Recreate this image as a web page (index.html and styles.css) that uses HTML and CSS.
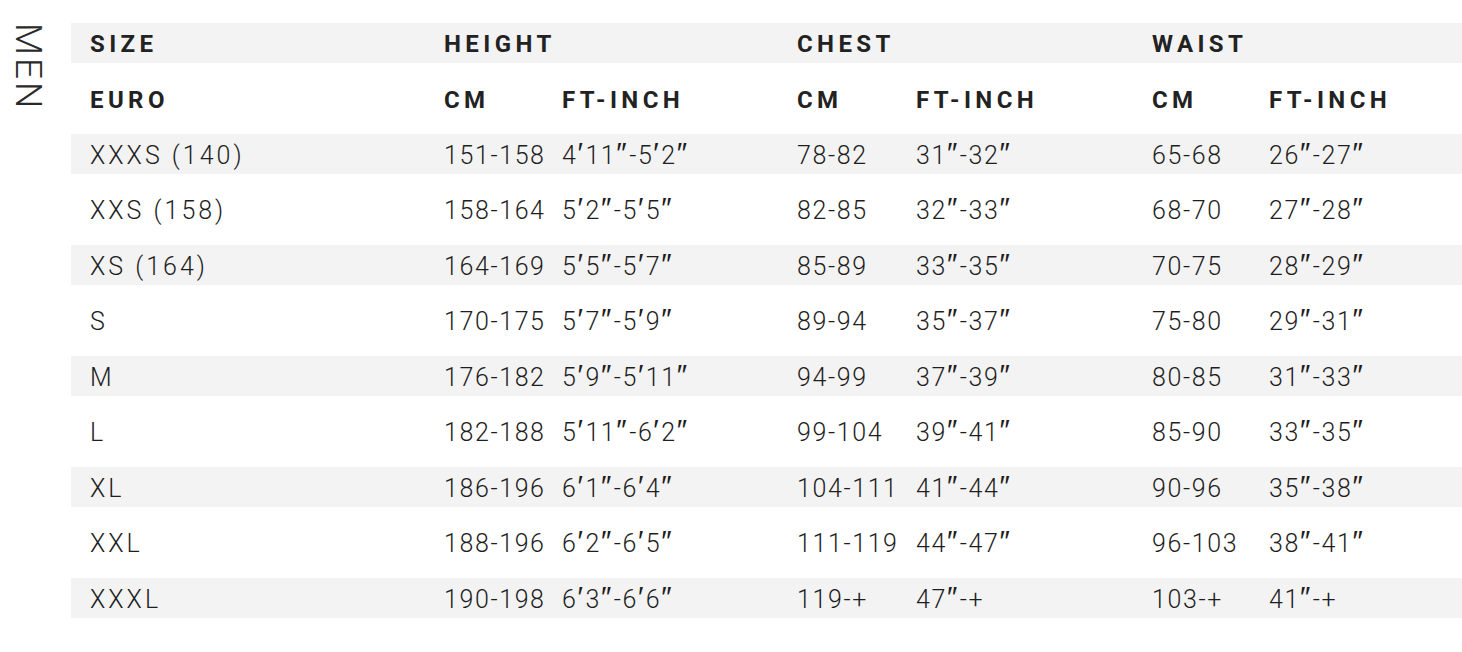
FILE: index.html
```html
<!DOCTYPE html>
<html lang="en">
<head>
<meta charset="utf-8">
<title>Size chart</title>
<link rel="stylesheet" href="styles.css">
</head>
<body>
<div class="page">
  <div class="side"><span class="side-label">MEN</span></div>
  <div class="chart">
    <div class="row shade head">
      <div class="cell">SIZE</div>
      <div class="cell span2">HEIGHT</div>
      <div class="cell span2">CHEST</div>
      <div class="cell span2">WAIST</div>
    </div>
    <div class="row head">
      <div class="cell">EURO</div>
      <div class="cell">CM</div><div class="cell">FT-INCH</div>
      <div class="cell">CM</div><div class="cell">FT-INCH</div>
      <div class="cell">CM</div><div class="cell">FT-INCH</div>
    </div>
    <div class="row shade">
      <div class="cell size">XXXS (140)</div>
      <div class="cell">151-158</div><div class="cell">4<span class="pr">′</span>11<span class="pr">″</span>-5<span class="pr">′</span>2<span class="pr">″</span></div>
      <div class="cell">78-82</div><div class="cell">31<span class="pr">″</span>-32<span class="pr">″</span></div>
      <div class="cell">65-68</div><div class="cell">26<span class="pr">″</span>-27<span class="pr">″</span></div>
    </div>
    <div class="row">
      <div class="cell size">XXS (158)</div>
      <div class="cell">158-164</div><div class="cell">5<span class="pr">′</span>2<span class="pr">″</span>-5<span class="pr">′</span>5<span class="pr">″</span></div>
      <div class="cell">82-85</div><div class="cell">32<span class="pr">″</span>-33<span class="pr">″</span></div>
      <div class="cell">68-70</div><div class="cell">27<span class="pr">″</span>-28<span class="pr">″</span></div>
    </div>
    <div class="row shade">
      <div class="cell size">XS (164)</div>
      <div class="cell">164-169</div><div class="cell">5<span class="pr">′</span>5<span class="pr">″</span>-5<span class="pr">′</span>7<span class="pr">″</span></div>
      <div class="cell">85-89</div><div class="cell">33<span class="pr">″</span>-35<span class="pr">″</span></div>
      <div class="cell">70-75</div><div class="cell">28<span class="pr">″</span>-29<span class="pr">″</span></div>
    </div>
    <div class="row">
      <div class="cell size">S</div>
      <div class="cell">170-175</div><div class="cell">5<span class="pr">′</span>7<span class="pr">″</span>-5<span class="pr">′</span>9<span class="pr">″</span></div>
      <div class="cell">89-94</div><div class="cell">35<span class="pr">″</span>-37<span class="pr">″</span></div>
      <div class="cell">75-80</div><div class="cell">29<span class="pr">″</span>-31<span class="pr">″</span></div>
    </div>
    <div class="row shade">
      <div class="cell size">M</div>
      <div class="cell">176-182</div><div class="cell">5<span class="pr">′</span>9<span class="pr">″</span>-5<span class="pr">′</span>11<span class="pr">″</span></div>
      <div class="cell">94-99</div><div class="cell">37<span class="pr">″</span>-39<span class="pr">″</span></div>
      <div class="cell">80-85</div><div class="cell">31<span class="pr">″</span>-33<span class="pr">″</span></div>
    </div>
    <div class="row">
      <div class="cell size">L</div>
      <div class="cell">182-188</div><div class="cell">5<span class="pr">′</span>11<span class="pr">″</span>-6<span class="pr">′</span>2<span class="pr">″</span></div>
      <div class="cell">99-104</div><div class="cell">39<span class="pr">″</span>-41<span class="pr">″</span></div>
      <div class="cell">85-90</div><div class="cell">33<span class="pr">″</span>-35<span class="pr">″</span></div>
    </div>
    <div class="row shade">
      <div class="cell size">XL</div>
      <div class="cell">186-196</div><div class="cell">6<span class="pr">′</span>1<span class="pr">″</span>-6<span class="pr">′</span>4<span class="pr">″</span></div>
      <div class="cell">104-111</div><div class="cell">41<span class="pr">″</span>-44<span class="pr">″</span></div>
      <div class="cell">90-96</div><div class="cell">35<span class="pr">″</span>-38<span class="pr">″</span></div>
    </div>
    <div class="row">
      <div class="cell size">XXL</div>
      <div class="cell">188-196</div><div class="cell">6<span class="pr">′</span>2<span class="pr">″</span>-6<span class="pr">′</span>5<span class="pr">″</span></div>
      <div class="cell">111-119</div><div class="cell">44<span class="pr">″</span>-47<span class="pr">″</span></div>
      <div class="cell">96-103</div><div class="cell">38<span class="pr">″</span>-41<span class="pr">″</span></div>
    </div>
    <div class="row shade">
      <div class="cell size">XXXL</div>
      <div class="cell">190-198</div><div class="cell">6<span class="pr">′</span>3<span class="pr">″</span>-6<span class="pr">′</span>6<span class="pr">″</span></div>
      <div class="cell">119-+</div><div class="cell">47<span class="pr">″</span>-+</div>
      <div class="cell">103-+</div><div class="cell">41<span class="pr">″</span>-+</div>
    </div>
  </div>
</div>
</body>
</html>
```

FILE: styles.css
```css
html, body {
  margin: 0;
  padding: 0;
  background: #ffffff;
  overflow: hidden;
}

body {
  font-family: Roboto, "DejaVu Sans", sans-serif;
  color: #1e1e1e;
}

.page {
  display: flex;
  width: 1462px;
  height: 652px;
  padding-top: 23px;
  box-sizing: border-box;
}

.side {
  width: 71px;
  flex: none;
  display: flex;
  justify-content: flex-start;
  padding-left: 10px;
  box-sizing: border-box;
}

.side-label {
  writing-mode: vertical-rl;
  font-family: Roboto, "Liberation Sans", sans-serif;
  font-weight: 300;
  font-size: 37px;
  line-height: 1;
  letter-spacing: 3px;
  color: #2a2a2a;
}

.chart {
  flex: none;
  display: flex;
  flex-direction: column;
  gap: 16px;
  width: 1416px;
}

.row {
  display: grid;
  grid-template-columns: 354px 118px 235px 119px 236px 117px 237px;
  height: 39.5px;
  align-items: center;
  font-size: 25px;
  font-weight: 300;
  letter-spacing: 1.6px;
  white-space: nowrap;
}

.row.shade {
  background: #f3f3f3;
}

.row.head {
  font-weight: 700;
  font-size: 24px;
  letter-spacing: 4.4px;
  color: #222222;
}

.cell {
  padding-left: 19px;
  padding-top: 4px;
  line-height: 30px;
}

.cell.size {
  letter-spacing: 3px;
}

.pr {
  font-family: "DejaVu Sans", sans-serif;
  font-size: 29px;
  line-height: 0;
  letter-spacing: 2.5px;
  vertical-align: 1px;
}

.head .cell {
  padding-top: 3px;
}

.span2 {
  grid-column: span 2;
}
```
